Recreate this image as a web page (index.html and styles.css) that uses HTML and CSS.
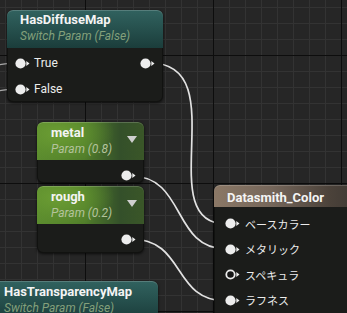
FILE: index.html
```html
<!DOCTYPE html>
<html>
<head>
<meta charset="utf-8">
<link rel="stylesheet" href="styles.css">
</head>
<body>
<div class="graph">
  <svg class="wires" width="347" height="313" viewBox="0 0 347 313">
    <path class="wire dim" d="M-2,65 C5,64 8,63 15,63"/>
    <path class="wire dim" d="M-2,91 C5,90 8,89 15,89"/>
    <path class="wire" d="M150,63 C236,63 150,224 226,224"/>
    <path class="wire" d="M131,176 C186,176 172,249 226,249"/>
    <path class="wire" d="M131,239 C186,239 172,301 226,301"/>
  </svg>

  <div class="node n-diffuse">
    <div class="head teal">
      <div class="texts">
        <div class="title">HasDiffuseMap</div>
        <div class="sub">Switch Param (False)</div>
      </div>
    </div>
    <div class="body switch-body">
      <div class="col">
        <div class="row"><svg class="pin" viewBox="0 0 15 11"><circle cx="5.5" cy="5.5" r="5.1"/><path d="M11.3 3 L14.5 5.5 L11.3 8Z"/></svg><span class="lbl">True</span></div>
        <div class="row"><svg class="pin" viewBox="0 0 15 11"><circle cx="5.5" cy="5.5" r="5.1"/><path d="M11.3 3 L14.5 5.5 L11.3 8Z"/></svg><span class="lbl">False</span></div>
      </div>
      <div class="col">
        <div class="row"><svg class="pin" viewBox="0 0 15 11"><circle cx="5.5" cy="5.5" r="5.1"/><path d="M11.3 3 L14.5 5.5 L11.3 8Z"/></svg></div>
      </div>
    </div>
  </div>

  <div class="node param n-metal">
    <div class="head green">
      <div class="texts">
        <div class="title">metal</div>
        <div class="sub">Param (0.8)</div>
      </div>
      <svg class="arrow" viewBox="0 0 10 7"><path d="M0 0 L10 0 L5 7Z"/></svg>
    </div>
    <div class="body param-body short">
      <div class="row"><svg class="pin" viewBox="0 0 15 11"><circle cx="5.5" cy="5.5" r="5.1"/><path d="M11.3 3 L14.5 5.5 L11.3 8Z"/></svg></div>
    </div>
  </div>

  <div class="node param n-rough">
    <div class="head green">
      <div class="texts">
        <div class="title">rough</div>
        <div class="sub">Param (0.2)</div>
      </div>
      <svg class="arrow" viewBox="0 0 10 7"><path d="M0 0 L10 0 L5 7Z"/></svg>
    </div>
    <div class="body param-body">
      <div class="row"><svg class="pin" viewBox="0 0 15 11"><circle cx="5.5" cy="5.5" r="5.1"/><path d="M11.3 3 L14.5 5.5 L11.3 8Z"/></svg></div>
    </div>
  </div>

  <div class="node n-color">
    <div class="head brown">
      <div class="title">Datasmith_Color</div>
    </div>
    <div class="body color-body">
      <div class="row"><svg class="pin" viewBox="0 0 15 11"><circle cx="5.5" cy="5.5" r="5.1"/><path d="M11.3 3 L14.5 5.5 L11.3 8Z"/></svg><span class="lbl jp">ベースカラー</span></div>
      <div class="row"><svg class="pin" viewBox="0 0 15 11"><circle cx="5.5" cy="5.5" r="5.1"/><path d="M11.3 3 L14.5 5.5 L11.3 8Z"/></svg><span class="lbl jp">メタリック</span></div>
      <div class="row"><svg class="pin hollow" viewBox="0 0 15 11"><circle cx="5.5" cy="5.5" r="4.2"/><path d="M11.3 3 L14.5 5.5 L11.3 8Z"/></svg><span class="lbl jp">スペキュラ</span></div>
      <div class="row"><svg class="pin" viewBox="0 0 15 11"><circle cx="5.5" cy="5.5" r="5.1"/><path d="M11.3 3 L14.5 5.5 L11.3 8Z"/></svg><span class="lbl jp">ラフネス</span></div>
    </div>
  </div>

  <div class="node n-transp">
    <div class="head teal">
      <div class="texts">
        <div class="title">HasTransparencyMap</div>
        <div class="sub">Switch Param (False)</div>
      </div>
    </div>
    <div class="body switch-body"></div>
  </div>
</div>
</body>
</html>
```

FILE: styles.css
```css
* { box-sizing: border-box; }
html, body { margin: 0; padding: 0; }
body {
  width: 347px;
  height: 313px;
  overflow: hidden;
  font-family: Roboto, "Noto Sans", sans-serif;
  background: #262626;
}
.graph {
  position: relative;
  width: 347px;
  height: 313px;
  overflow: hidden;
  background-color: #262626;
  background-image:
    linear-gradient(to right, #0d0d0d 1px, transparent 1px),
    linear-gradient(to bottom, #0d0d0d 1px, transparent 1px),
    linear-gradient(to right, #333333 1px, transparent 1px),
    linear-gradient(to bottom, #333333 1px, transparent 1px);
  background-size: 128px 100%, 100% 128px, 16px 100%, 100% 16px;
  background-position: 85px 0, 0 55px, 5px 0, 0 7px;
}
.wires {
  position: absolute;
  left: 0;
  top: 0;
  z-index: 0;
}
.wire {
  fill: none;
  stroke: #e2e2e2;
  stroke-width: 1.7;
}
.wire.dim {
  stroke: #a8a8a8;
  stroke-width: 1.3;
}
.node {
  position: absolute;
  z-index: 1;
  border-radius: 6px;
  background: #1b1c1a;
  box-shadow: 0 1px 3px rgba(0,0,0,0.7), inset 0 0 0 1px rgba(0,0,0,0.35);
  color: #ececec;
}
.head {
  border-radius: 6px 6px 0 0;
  display: flex;
  justify-content: space-between;
  align-items: flex-start;
  box-shadow: inset 0 1px 0 rgba(255,255,255,0.18);
}
.title {
  font-weight: 700;
  font-size: 13px;
  line-height: 15px;
  color: #f4f4f4;
  white-space: nowrap;
}
.sub {
  font-style: italic;
  font-size: 12px;
  line-height: 14px;
  margin-top: 2px;
  white-space: nowrap;
}
.teal {
  height: 38px;
  padding: 2px 0 0 13px;
  background: linear-gradient(180deg, #31625f 0%, #27524f 45%, #1b3d3b 100%);
}
.teal .sub { color: #83a07b; }
.green {
  height: 38px;
  padding: 3px 7px 0 14px;
  background:
    radial-gradient(ellipse 70% 110% at 20% 30%, rgba(110,160,52,0.9) 0%, rgba(100,150,48,0.5) 45%, rgba(0,0,0,0) 75%),
    linear-gradient(90deg, #5a8a2e 0%, #4f7b2a 45%, #34502a 78%, #3a5628 100%);
}
.green .sub { color: #b4c39c; }
.arrow {
  width: 10px;
  height: 7px;
  margin-top: 11px;
  fill: #cfcfcf;
}
.brown {
  height: 22px;
  padding: 5px 0 0 13px;
  background: linear-gradient(90deg, #8b7866 0%, #75665a 40%, #4b423a 80%, #3e3833 100%);
}
.body {
  border-radius: 0 0 6px 6px;
}
.row {
  display: flex;
  align-items: center;
}
.pin {
  width: 15px;
  height: 11px;
  flex: none;
  fill: #ededed;
}
.pin.hollow circle {
  fill: #151515;
  stroke: #ededed;
  stroke-width: 1.8;
}
.lbl {
  font-size: 12px;
  line-height: 14px;
  color: #ececec;
}
.lbl.jp {
  font-family: "Noto Sans CJK JP", sans-serif;
  font-size: 11px;
}

/* HasDiffuseMap */
.n-diffuse {
  left: 7px;
  top: 10px;
  width: 156px;
}
.switch-body {
  display: flex;
  justify-content: space-between;
  padding: 2px 8px 0 8px;
  height: 54px;
}
.switch-body .row {
  height: 26px;
  gap: 4px;
}

/* Params */
.param { width: 107px; }
.n-metal { left: 37px; top: 122px; }
.n-rough { left: 37px; top: 186px; }
.param-body {
  display: flex;
  justify-content: flex-end;
  padding: 2px 8px 0 0;
  height: 29px;
}
.param-body.short { height: 23px; }
.param-body .row { height: 26px; }

/* Datasmith_Color */
.n-color {
  left: 214px;
  top: 185px;
  width: 145px;
  height: 150px;
}
.color-body {
  padding: 4px 0 0 11px;
}
.color-body .row {
  height: 25.5px;
  gap: 5px;
}

/* HasTransparencyMap */
.n-transp {
  left: -9px;
  top: 281px;
  width: 167px;
}
.n-transp .teal { padding-top: 3px; }
```
